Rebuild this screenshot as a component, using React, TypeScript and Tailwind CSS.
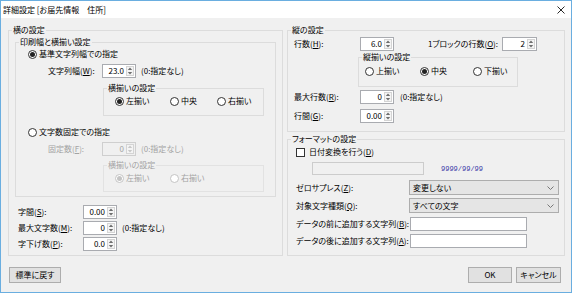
import React from 'react'

// Windows 10 style "詳細設定" dialog, scaled down.
const FONT = "font-['Noto_Sans_CJK_JP','Noto_Sans',sans-serif]"

function Legend({ children, disabled }: { children: React.ReactNode; disabled?: boolean }) {
    return (
        <legend className={`ml-[3px] px-[1px] leading-[10px] ${disabled ? 'text-[#a3a3a3]' : ''}`}>
            {children}
        </legend>
    )
}

function Radio({ label, checked, disabled, w }: { label: string; checked?: boolean; disabled?: boolean; w?: string }) {
    return (
        <div className={`flex h-[10px] shrink-0 items-center gap-[2px] ${w ?? ''}`}>
            <span
                className={`flex h-[9px] w-[9px] items-center justify-center rounded-full border bg-white ${
                    disabled ? 'border-[#c4c4c4]' : 'border-[#333333]'
                }`}
            >
                {checked && (
                    <span className={`h-[5px] w-[5px] rounded-full ${disabled ? 'bg-[#c4c4c4]' : 'bg-[#222222]'}`} />
                )}
            </span>
            <span className={`leading-[10px] ${disabled ? 'text-[#a3a3a3]' : ''}`}>{label}</span>
        </div>
    )
}

function Spin({ value, w, disabled }: { value: string; w: string; disabled?: boolean }) {
    const c = disabled ? '#c8c8c8' : '#6e6e6e'
    return (
        <div
            className={`flex h-[14px] shrink-0 items-stretch border ${w} ${
                disabled ? 'border-[#cfcfcf] bg-[#f0f0f0] text-[#a3a3a3]' : 'border-[#a9abb0] bg-white'
            }`}
        >
            <span className="flex-1 pr-[2px] text-right leading-[12px]">{value}</span>
            <span className="my-[1px] mr-[1px] flex w-[8px] flex-col items-center justify-center border border-[#d4d4d4] bg-[#f4f4f4]">
                <svg width="6" height="9" viewBox="0 0 6 9">
                    <path d="M3 0.5 L5.5 3.5 H0.5Z M3 8.5 L5.5 5.5 H0.5Z" fill={c} />
                </svg>
            </span>
        </div>
    )
}

function Select({ value }: { value: string }) {
    return (
        <div className="flex h-[15px] w-[150px] shrink-0 items-center justify-between border border-[#adadad] bg-[#e5e5e5] pl-[3px] pr-[4px]">
            <span className="leading-[10px]">{value}</span>
            <svg width="7" height="4" viewBox="0 0 7 4">
                <path d="M0.5 0.5 L3.5 3.5 L6.5 0.5" stroke="#777" fill="none" />
            </svg>
        </div>
    )
}

function Button({ label, w }: { label: string; w: string }) {
    return (
        <div className={`flex h-[16px] items-center justify-center border border-[#adadad] bg-[#e1e1e1] leading-[10px] ${w}`}>
            {label}
        </div>
    )
}

export default function App() {
    return (
        <div
            className={`flex h-[293px] w-[572px] flex-col whitespace-nowrap border border-[#6aaee0] bg-[#f0f0f0] text-[8px] text-black [font-feature-settings:'palt'] ${FONT}`}
        >
            <div className="flex h-[17px] shrink-0 items-center justify-between bg-white pl-[2px] pr-[6px]">
                <span className="leading-[10px]">詳細設定 [お届先情報　住所]</span>
                <svg width="8" height="8" viewBox="0 0 8 8">
                    <path d="M0.5 0.5 L7.5 7.5 M7.5 0.5 L0.5 7.5" stroke="#111" strokeWidth="0.9" />
                </svg>
            </div>

            <div className="flex-1 pl-[7px] pr-[6px] pt-[7px]">
                <div className="flex gap-[4px]">
                    {/* 横の設定 */}
                    <fieldset className="h-[231px] w-[275px] shrink-0 border border-[#dcdcdc]">
                        <Legend>横の設定</Legend>
                        <fieldset className="ml-[6px] mt-[2px] h-[160px] w-[261px] border border-[#dcdcdc]">
                            <Legend>印刷幅と横揃い設定</Legend>
                            <div className="ml-[12px] mt-[2px]">
                                <Radio label="基準文字列幅での指定" checked />
                            </div>
                            <div className="ml-[32px] mt-[5px] flex items-center">
                                <span className="w-[54px] shrink-0 leading-[10px]">文字列幅(<u>W</u>):</span>
                                <Spin value="23.0" w="w-[34px]" />
                                <span className="ml-[5px] leading-[10px]">(0:指定なし)</span>
                            </div>
                            <fieldset className="ml-[87px] mt-[5px] h-[33px] w-[161px] border border-[#dcdcdc]">
                                <Legend>横揃いの設定</Legend>
                                <div className="ml-[11px] mt-[3px] flex">
                                    <Radio label="左揃い" checked w="w-[55px]" />
                                    <Radio label="中央" w="w-[47px]" />
                                    <Radio label="右揃い" />
                                </div>
                            </fieldset>
                            <div className="ml-[12px] mt-[11px]">
                                <Radio label="文字数固定での指定" />
                            </div>
                            <div className="ml-[32px] mt-[5px] flex items-center text-[#a3a3a3]">
                                <span className="w-[54px] shrink-0 leading-[10px]">固定数(<u>F</u>):</span>
                                <Spin value="0" w="w-[34px]" disabled />
                                <span className="ml-[5px] leading-[10px]">(0:指定なし)</span>
                            </div>
                            <fieldset className="ml-[87px] mt-[4px] h-[32px] w-[161px] border border-[#e2e2e2]">
                                <Legend disabled>横揃いの設定</Legend>
                                <div className="ml-[11px] mt-[3px] flex">
                                    <Radio label="左揃い" checked disabled w="w-[55px]" />
                                    <Radio label="右揃い" disabled />
                                </div>
                            </fieldset>
                        </fieldset>

                        <div className="ml-[9px] mt-[8px] flex items-center">
                            <span className="w-[65px] shrink-0 leading-[10px]">字間(<u>S</u>):</span>
                            <Spin value="0.00" w="w-[34px]" />
                        </div>
                        <div className="ml-[9px] mt-[2px] flex items-center">
                            <span className="w-[65px] shrink-0 leading-[10px]">最大文字数(<u>M</u>):</span>
                            <Spin value="0" w="w-[34px]" />
                            <span className="ml-[5px] leading-[10px]">(0:指定なし)</span>
                        </div>
                        <div className="ml-[9px] mt-[2px] flex items-center">
                            <span className="w-[65px] shrink-0 leading-[10px]">字下げ数(<u>P</u>):</span>
                            <Spin value="0.0" w="w-[34px]" />
                        </div>
                    </fieldset>

                    <div className="flex w-[278px] shrink-0 flex-col gap-[2px]">
                        {/* 縦の設定 */}
                        <fieldset className="h-[107px] border border-[#dcdcdc]">
                            <Legend>縦の設定</Legend>
                            <div className="ml-[6px] mt-[2px] flex items-center">
                                <span className="w-[66px] shrink-0 leading-[10px]">行数(<u>H</u>):</span>
                                <Spin value="6.0" w="w-[34px]" />
                                <span className="ml-[34px] w-[74px] shrink-0 leading-[10px]">1ブロックの行数(<u>O</u>):</span>
                                <Spin value="2" w="w-[35px]" />
                            </div>
                            <fieldset className="ml-[70px] mt-[1px] h-[35px] w-[160px] border border-[#dcdcdc]">
                                <Legend>縦揃いの設定</Legend>
                                <div className="ml-[6px] mt-[4px] flex">
                                    <Radio label="上揃い" w="w-[55px]" />
                                    <Radio label="中央" checked w="w-[53px]" />
                                    <Radio label="下揃い" />
                                </div>
                            </fieldset>
                            <div className="ml-[6px] mt-[3px] flex items-center">
                                <span className="w-[66px] shrink-0 leading-[10px]">最大行数(<u>R</u>):</span>
                                <Spin value="0" w="w-[34px]" />
                                <span className="ml-[6px] leading-[10px]">(0:指定なし)</span>
                            </div>
                            <div className="ml-[6px] mt-[5px] flex items-center">
                                <span className="w-[66px] shrink-0 leading-[10px]">行間(<u>G</u>):</span>
                                <Spin value="0.00" w="w-[34px]" />
                            </div>
                        </fieldset>

                        {/* フォーマットの設定 */}
                        <fieldset className="h-[122px] border border-[#dcdcdc]">
                            <Legend>フォーマットの設定</Legend>
                            <div className="ml-[8px] mt-[3px] flex h-[10px] items-center gap-[4px]">
                                <span className="h-[9px] w-[9px] border border-[#333333] bg-white" />
                                <span className="leading-[10px]">日付変換を行う(<u>D</u>)</span>
                            </div>
                            <div className="ml-[24px] mt-[5px] flex items-center">
                                <span className="h-[13px] w-[112px] border border-[#cccccc] bg-[#f0f0f0]" />
                                <span className="ml-[17px] font-['Liberation_Mono',monospace] text-[7px] leading-[10px] text-[#3b3ba8]">
                                    9999/99/99
                                </span>
                            </div>
                            <div className="ml-[8px] mt-[5px] flex items-center">
                                <span className="w-[113px] shrink-0 leading-[10px]">ゼロサプレス(<u>Z</u>):</span>
                                <Select value="変更しない" />
                            </div>
                            <div className="ml-[8px] mt-[3px] flex items-center">
                                <span className="w-[113px] shrink-0 leading-[10px]">対象文字種類(<u>Q</u>):</span>
                                <Select value="すべての文字" />
                            </div>
                            <div className="ml-[8px] mt-[4px] flex items-center">
                                <span className="w-[114px] shrink-0 leading-[10px]">データの前に追加する文字列(<u>B</u>):</span>
                                <span className="h-[14px] w-[117px] border border-[#a9abb0] bg-white" />
                            </div>
                            <div className="ml-[8px] mt-[3px] flex items-center">
                                <span className="w-[114px] shrink-0 leading-[10px]">データの後に追加する文字列(<u>A</u>):</span>
                                <span className="h-[14px] w-[117px] border border-[#a9abb0] bg-white" />
                            </div>
                        </fieldset>
                    </div>
                </div>

                <div className="mt-[11px] flex items-center">
                    <div className="ml-[1px]">
                        <Button label="標準に戻す" w="w-[52px]" />
                    </div>
                    <div className="ml-auto mr-[4px] flex gap-[4px]">
                        <Button label="OK" w="w-[44px]" />
                        <Button label="キャンセル" w="w-[45px]" />
                    </div>
                </div>
            </div>
        </div>
    )
}
